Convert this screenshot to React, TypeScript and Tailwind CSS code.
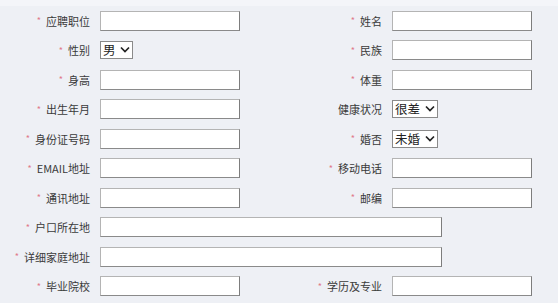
import { useState } from 'react'

type Field = {
  label: string
  required?: boolean
  kind?: 'input' | 'select'
  options?: string[]
  wide?: boolean
}

const rows: Field[][] = [
  [{ label: '应聘职位', required: true }, { label: '姓名', required: true }],
  [{ label: '性别', required: true, kind: 'select', options: ['男', '女'] }, { label: '民族', required: true }],
  [{ label: '身高', required: true }, { label: '体重', required: true }],
  [{ label: '出生年月', required: true }, { label: '健康状况', kind: 'select', options: ['很差', '一般', '良好'] }],
  [{ label: '身份证号码', required: true }, { label: '婚否', required: true, kind: 'select', options: ['未婚', '已婚'] }],
  [{ label: 'EMAIL地址', required: true }, { label: '移动电话', required: true }],
  [{ label: '通讯地址', required: true }, { label: '邮编', required: true }],
  [{ label: '户口所在地', required: true, wide: true }],
  [{ label: '详细家庭地址', required: true, wide: true }],
  [{ label: '毕业院校', required: true }, { label: '学历及专业', required: true }],
]

function Label({ field }: { field: Field }) {
  return (
    <div className="flex items-center justify-end pr-[10px] text-[11px] text-[#3a3a3a] whitespace-nowrap">
      {field.required && <span className="mr-[5px] text-[9px] text-[#e07a8a] leading-none">*</span>}
      {field.label}
    </div>
  )
}

function Select({ options }: { options: string[] }) {
  const [value, setValue] = useState(options[0])
  return (
    <div className="relative flex items-center">
      <select
        value={value}
        onChange={(e) => setValue(e.target.value)}
        className="appearance-none h-[18px] pl-[2px] pr-[16px] bg-white border border-[#8a8a8a] text-[12.5px] leading-none text-[#222] outline-none"
      >
        {options.map((o) => (
          <option key={o}>{o}</option>
        ))}
      </select>
      <svg className="pointer-events-none absolute right-[3px] top-1/2 -translate-y-1/2" width="10" height="7" viewBox="0 0 10 7">
        <path d="M1 1l4 4L9 1" fill="none" stroke="#222" strokeWidth="1.7" />
      </svg>
    </div>
  )
}

function Control({ field }: { field: Field }) {
  if (field.kind === 'select') {
    return <Select options={field.options ?? []} />
  }
  return (
    <input
      className={`${field.wide ? 'w-[342px]' : 'w-[140px]'} h-[20px] bg-white border border-[#b4b4b4] border-r-[#7d7d7d] border-b-[#8a8a8a] outline-none text-[12px] px-1`}
    />
  )
}

export default function App() {
  return (
    <div
      className="w-[558px] h-[303px] overflow-hidden bg-[#eef0f5] border-t-[6px] border-[#f4f5f9]"
      style={{ fontFamily: '"Noto Sans CJK SC", "Microsoft YaHei", sans-serif' }}
    >
      <div className="grid grid-cols-[100px_139px_153px_140px] auto-rows-[29.5px]">
        {rows.map((row, i) =>
          row.length === 1 ? (
            <div key={i} className="contents">
              <Label field={row[0]} />
              <div className="col-span-3 flex items-center">
                <Control field={row[0]} />
              </div>
            </div>
          ) : (
            <div key={i} className="contents">
              <Label field={row[0]} />
              <div className="flex items-center">
                <Control field={row[0]} />
              </div>
              <Label field={row[1]} />
              <div className="flex items-center">
                <Control field={row[1]} />
              </div>
            </div>
          ),
        )}
      </div>
    </div>
  )
}
